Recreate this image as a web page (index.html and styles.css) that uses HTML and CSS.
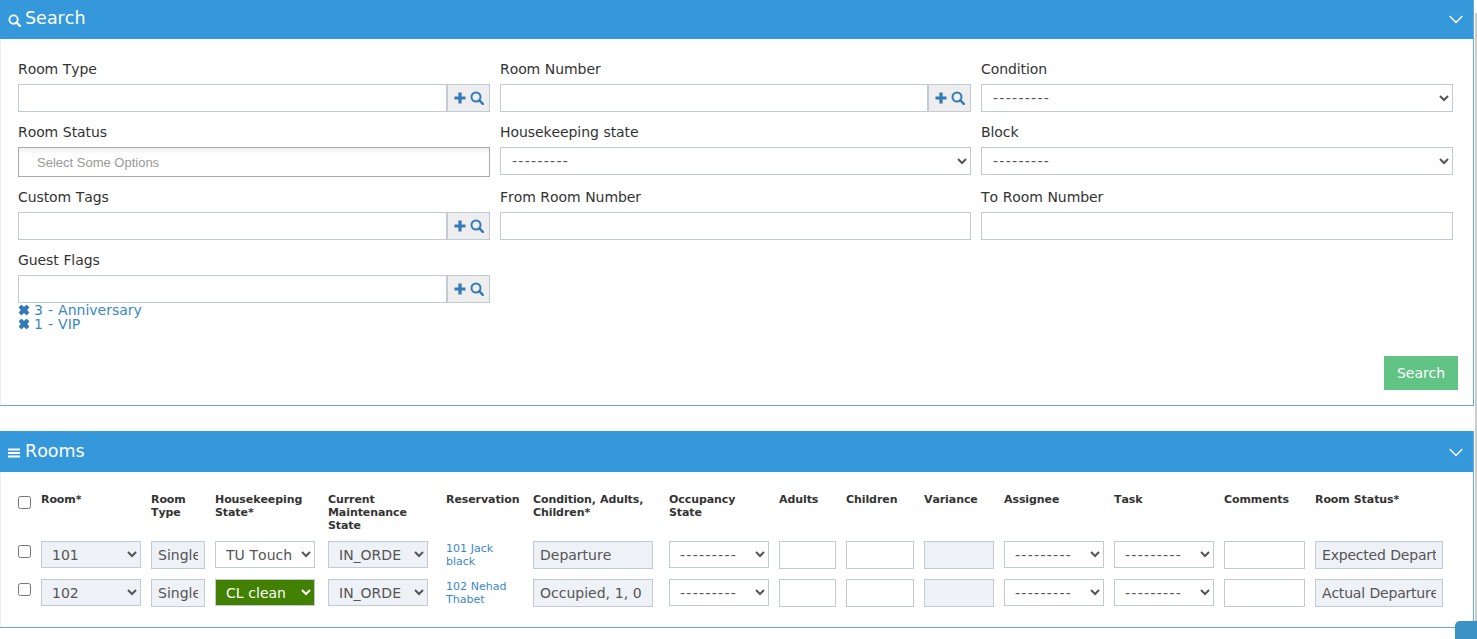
FILE: index.html
```html
<!DOCTYPE html>
<html lang="en">
<head>
  <meta charset="UTF-8">
  <title>Rooms</title>
  <link rel="stylesheet" href="styles.css">
</head>
<body>
  <svg class="icon-defs" width="0" height="0">
    <symbol id="i-search" viewBox="0 0 14 14"><circle cx="6" cy="6" r="4.5" fill="none" stroke="currentColor" stroke-width="2"/><path d="M9.2 9.2L12.8 12.8" stroke="currentColor" stroke-width="2.4" stroke-linecap="round"/></symbol>
    <symbol id="i-plus" viewBox="0 0 12 12"><path d="M4.4 0.5h3.2v3.9h3.9v3.2H7.6v3.9H4.4V7.6H0.5V4.4h3.9z" fill="currentColor"/></symbol>
    <symbol id="i-remove" viewBox="0 0 12 12"><path d="M1.4 3.4L3.4 1.4 6 3.6 8.6 1.4 10.6 3.4 8.4 6 10.6 8.6 8.6 10.6 6 8.4 3.4 10.6 1.4 8.6 3.6 6z" fill="currentColor" stroke="currentColor" stroke-width="1.2" stroke-linejoin="round"/></symbol>
    <symbol id="i-menu" viewBox="0 0 12 10"><path d="M0 0.5h12v2H0zM0 4h12v2H0zM0 7.5h12v2H0z" fill="currentColor"/></symbol>
    <symbol id="i-chevron" viewBox="0 0 14 9"><path d="M0.7 1L7 7.4 13.3 1" fill="none" stroke="currentColor" stroke-width="1.4"/></symbol>
  </svg>

  <section class="panel panel-search">
    <header class="panel-heading">
      <svg class="head-icon"><use href="#i-search"/></svg>
      <span class="panel-title">Search</span>
      <svg class="head-chevron"><use href="#i-chevron"/></svg>
    </header>
    <div class="panel-body">
      <form class="search-grid">
        <div class="field">
          <label>Room Type</label>
          <div class="input-group">
            <input type="text">
            <span class="addon"><svg class="addon-plus"><use href="#i-plus"/></svg><svg class="addon-search"><use href="#i-search"/></svg></span>
          </div>
        </div>
        <div class="field">
          <label>Room Number</label>
          <div class="input-group">
            <input type="text">
            <span class="addon"><svg class="addon-plus"><use href="#i-plus"/></svg><svg class="addon-search"><use href="#i-search"/></svg></span>
          </div>
        </div>
        <div class="field">
          <label>Condition</label>
          <select class="blank"><option>---------</option></select>
        </div>

        <div class="field">
          <label>Room Status</label>
          <div class="chosen">Select Some Options</div>
        </div>
        <div class="field">
          <label>Housekeeping state</label>
          <select class="blank"><option>---------</option></select>
        </div>
        <div class="field">
          <label>Block</label>
          <select class="blank"><option>---------</option></select>
        </div>

        <div class="field">
          <label>Custom Tags</label>
          <div class="input-group">
            <input type="text">
            <span class="addon"><svg class="addon-plus"><use href="#i-plus"/></svg><svg class="addon-search"><use href="#i-search"/></svg></span>
          </div>
        </div>
        <div class="field">
          <label>From Room Number</label>
          <input type="text">
        </div>
        <div class="field">
          <label>To Room Number</label>
          <input type="text">
        </div>

        <div class="field">
          <label>Guest Flags</label>
          <div class="input-group">
            <input type="text">
            <span class="addon"><svg class="addon-plus"><use href="#i-plus"/></svg><svg class="addon-search"><use href="#i-search"/></svg></span>
          </div>
          <div class="tags">
            <a class="tag" href="#"><svg><use href="#i-remove"/></svg>3 - Anniversary</a>
            <a class="tag" href="#"><svg><use href="#i-remove"/></svg>1 - VIP</a>
          </div>
        </div>
      </form>
      <div class="search-actions">
        <button type="button" class="btn-search">Search</button>
      </div>
    </div>
  </section>

  <section class="panel panel-rooms">
    <header class="panel-heading">
      <svg class="head-icon head-menu"><use href="#i-menu"/></svg>
      <span class="panel-title">Rooms</span>
      <svg class="head-chevron"><use href="#i-chevron"/></svg>
    </header>
    <div class="panel-body">
      <table class="rooms">
        <colgroup>
          <col class="c-check"><col class="c-room"><col class="c-type"><col class="c-hk"><col class="c-maint">
          <col class="c-res"><col class="c-cond"><col class="c-occ"><col class="c-adults"><col class="c-children">
          <col class="c-var"><col class="c-assignee"><col class="c-task"><col class="c-comments"><col class="c-status">
        </colgroup>
        <thead>
          <tr>
            <th><input type="checkbox"></th>
            <th>Room*</th>
            <th>Room Type</th>
            <th>Housekeeping State*</th>
            <th>Current Maintenance State</th>
            <th>Reservation</th>
            <th>Condition, Adults, Children*</th>
            <th>Occupancy State</th>
            <th>Adults</th>
            <th>Children</th>
            <th>Variance</th>
            <th>Assignee</th>
            <th>Task</th>
            <th>Comments</th>
            <th>Room Status*</th>
          </tr>
        </thead>
        <tbody>
          <tr>
            <td><input type="checkbox"></td>
            <td><select class="w-100 ro"><option>101</option></select></td>
            <td><input class="w-54 ro" type="text" value="Single" readonly></td>
            <td><select class="w-100"><option>TU Touch</option></select></td>
            <td><select class="w-100 ro clip"><option>IN_ORDER</option></select></td>
            <td class="res"><a href="#">101 Jack black</a></td>
            <td><input class="w-120 ro" type="text" value="Departure" readonly></td>
            <td><select class="w-100 blank"><option>---------</option></select></td>
            <td><input class="w-57" type="text"></td>
            <td><input class="w-68" type="text"></td>
            <td><input class="w-70 ro" type="text" readonly></td>
            <td><select class="w-100 blank"><option>---------</option></select></td>
            <td><select class="w-100 blank"><option>---------</option></select></td>
            <td><input class="w-81" type="text"></td>
            <td><input class="w-128 ro" type="text" value="Expected Departure" readonly></td>
          </tr>
          <tr>
            <td><input type="checkbox"></td>
            <td><select class="w-100 ro"><option>102</option></select></td>
            <td><input class="w-54 ro" type="text" value="Single" readonly></td>
            <td><select class="w-100 hk-clean"><option>CL clean</option></select></td>
            <td><select class="w-100 ro clip"><option>IN_ORDER</option></select></td>
            <td class="res"><a href="#">102 Nehad Thabet</a></td>
            <td><input class="w-120 ro" type="text" value="Occupied, 1, 0" readonly></td>
            <td><select class="w-100 blank"><option>---------</option></select></td>
            <td><input class="w-57" type="text"></td>
            <td><input class="w-68" type="text"></td>
            <td><input class="w-70 ro" type="text" readonly></td>
            <td><select class="w-100 blank"><option>---------</option></select></td>
            <td><select class="w-100 blank"><option>---------</option></select></td>
            <td><input class="w-81" type="text"></td>
            <td><input class="w-128 ro" type="text" value="Actual Departure" readonly></td>
          </tr>
        </tbody>
      </table>
    </div>
  </section>

  <div class="scroll-strip"></div>
  <div class="corner-tab"></div>
</body>
</html>
```

FILE: styles.css
```css
html, body {
  height: 100%;
  overflow: hidden;
}
body {
  margin: 0;
  background: #fff;
  color: #333;
  font-family: "DejaVu Sans", sans-serif;
  font-size: 14px;
  font-kerning: none;
  word-spacing: .3px;
}
a {
  color: #3a87c8;
  text-decoration: none;
}
.icon-defs {
  position: absolute;
}

.panel {
  width: 1474px;
  box-sizing: border-box;
  border-right: 1px solid #5fa8e0;
  border-bottom: 1px solid #5fa8e0;
  box-shadow: inset 1px 0 0 #eee;
}
.panel-search {
  margin-top: -2px;
  margin-bottom: 25px;
}
.panel-heading {
  display: flex;
  align-items: center;
  height: 41px;
  padding: 0 10px 0 8px;
  background: #3498db;
  color: #fff;
}
.panel-title {
  font-size: 17.5px;
  margin-left: 4px;
  padding-bottom: 2px;
}
.head-icon {
  width: 13px;
  height: 13px;
  margin-top: 4px;
}
.head-menu {
  width: 12px;
  height: 10px;
  margin-top: 2px;
  margin-right: 1px;
}
.head-chevron {
  width: 14px;
  height: 9px;
  margin-left: auto;
  margin-top: 1px;
}
.panel-search .panel-body {
  padding: 20px 16px 15px 18px;
}
.panel-rooms .panel-body {
  padding: 20px 0 20px 18px;
}

.search-grid {
  display: grid;
  grid-template-columns: 472px 471px 472px;
  gap: 10px;
  align-items: start;
}
.field label {
  display: block;
  line-height: 20px;
  margin-bottom: 5px;
  letter-spacing: -.08px;
}
input, select {
  box-sizing: border-box;
  font-family: "DejaVu Sans", sans-serif;
  font-size: 14px;
  font-kerning: none;
  word-spacing: .3px;
  color: #555;
  background-color: #fff;
  border: 1px solid #c2cad8;
  border-radius: 0;
}
.field input[type="text"], .field select {
  display: block;
  width: 100%;
  height: 28px;
  padding: 0 7px;
}
.input-group {
  display: flex;
}
.field .input-group input[type="text"] {
  flex: 1;
  width: auto;
  min-width: 0;
}
.addon {
  display: flex;
  align-items: center;
  box-sizing: border-box;
  width: 43px;
  height: 28px;
  padding-left: 6px;
  gap: 4px;
  background: #eee;
  border: 1px solid #c2cad8;
  color: #337ab7;
}
.addon-plus {
  width: 12px;
  height: 12px;
}
.addon-search {
  width: 14px;
  height: 14px;
}
.chosen {
  box-sizing: border-box;
  height: 30px;
  padding: 0 18px;
  border: 1px solid #aaa;
  background: linear-gradient(#eee 0, #fff 6px);
  color: #999;
  font-family: "Liberation Sans", sans-serif;
  font-size: 13px;
  word-spacing: 0;
  line-height: 29px;
}
.tag {
  display: flex;
  align-items: center;
  height: 14px;
  line-height: 14px;
  word-spacing: .6px;
}
.tag svg {
  width: 12px;
  height: 12px;
  margin-right: 4px;
  color: #337ab7;
}
.search-actions {
  display: flex;
  justify-content: flex-end;
  margin-top: 25px;
}
.btn-search {
  width: 74px;
  height: 34px;
  margin-right: -1px;
  border: 0;
  background: #61c384;
  color: #fff;
  font-family: "DejaVu Sans", sans-serif;
  font-size: 14px;
}

.rooms {
  table-layout: fixed;
  width: 1425px;
  border-collapse: collapse;
}
.c-check { width: 23px; }
.c-room { width: 110px; }
.c-type { width: 64px; }
.c-hk { width: 113px; }
.c-maint { width: 118px; }
.c-res { width: 87px; }
.c-cond { width: 136px; }
.c-occ { width: 110px; }
.c-adults { width: 67px; }
.c-children { width: 78px; }
.c-var { width: 80px; }
.c-assignee { width: 110px; }
.c-task { width: 110px; }
.c-comments { width: 91px; }
.c-status { width: 138px; }
.rooms th {
  padding: 1px 10px 9px 0;
  font-size: 11px;
  line-height: 13px;
  letter-spacing: -.08px;
  text-align: left;
  vertical-align: top;
  height: 39px;
}
.rooms th input {
  margin: 3px 0 0;
}
.rooms td {
  padding: 0 0 10px;
  vertical-align: top;
  height: 28px;
}
.rooms tbody tr:last-child td {
  padding-bottom: 0;
}
.rooms td input[type="checkbox"] {
  margin: 4px 0 0;
  display: block;
}
.rooms td input[type="text"] {
  display: block;
  height: 28px;
  padding: 0 6px;
}
.rooms td select {
  display: block;
  height: 27px;
  padding: 0 6px;
}
.res {
  font-size: 11px;
  line-height: 13px;
}
.res a {
  display: block;
  padding-right: 10px;
  padding-top: 1px;
}
.ro {
  background-color: #eef1f6;
}
select.blank {
  letter-spacing: 1.3px;
}
.rooms td select.clip {
  padding-right: 9px;
}
.w-54 { width: 54px; }
.w-57 { width: 57px; }
.w-68 { width: 68px; }
.w-70 { width: 70px; }
.w-81 { width: 81px; }
.w-100 { width: 100px; }
.w-120 { width: 120px; }
.w-128 { width: 128px; letter-spacing: -.2px; }
select.hk-clean {
  background-color: #418000;
  color: #fff;
}

.scroll-strip {
  position: fixed;
  top: 13px;
  right: 0;
  bottom: 0;
  width: 2px;
  background: #ccc;
}
.corner-tab {
  position: fixed;
  right: 0;
  bottom: 0;
  width: 22px;
  height: 18px;
  background: #3a93c4;
  border-top-left-radius: 5px;
}
```
